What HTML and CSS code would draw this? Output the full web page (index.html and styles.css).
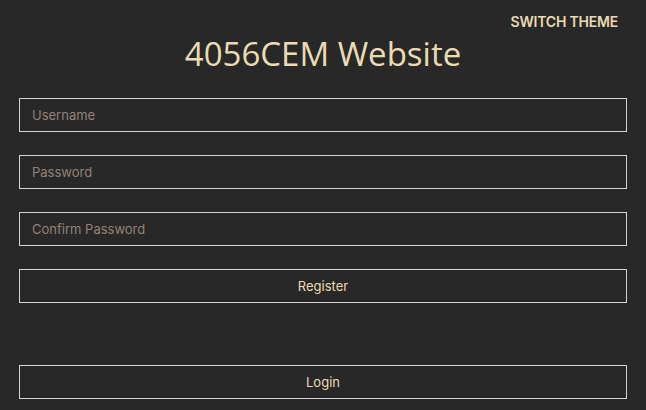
FILE: index.html
```html
<!DOCTYPE html>
<html>
<head>
<meta charset="utf-8">
<link rel="stylesheet" href="styles.css">
</head>
<body>
<div class="page">
  <header class="top">
    <button class="theme-btn">SWITCH THEME</button>
  </header>
  <h1 class="title">4056CEM Website</h1>
  <form class="form">
    <input class="field" type="text" placeholder="Username">
    <input class="field" type="password" placeholder="Password">
    <input class="field" type="password" placeholder="Confirm Password">
    <button class="btn" type="button">Register</button>
  </form>
  <div class="login-wrap">
    <button class="btn" type="button">Login</button>
  </div>
</div>
</body>
</html>
```
FILE: styles.css
```css
* { box-sizing: border-box; }
html, body { margin: 0; padding: 0; background: #282828; }
body { font-family: Inter, "Liberation Sans", sans-serif; color: #ebdbb2; }
.page { padding: 0 19px; }
.top { display: flex; justify-content: flex-end; padding: 11px 9px 0 0; height: 32px; }
.theme-btn {
  background: none; border: none; color: #ebdbb2; font-family: Inter, sans-serif;
  font-weight: 600; font-size: 14px; padding: 0; letter-spacing: -0.2px; cursor: pointer;
}
.title {
  margin: 0; text-align: center; font-family: "Open Sans", sans-serif; font-weight: 400;
  font-size: 33px; line-height: 44px; color: #ebdbb2; height: 66px;
}
.form { display: flex; flex-direction: column; gap: 23px; }
.field, .btn {
  display: block; width: 100%; height: 34px; background: transparent;
  border: 1px solid #d5d5d5; border-radius: 0; color: #ebdbb2;
  font-family: Inter, sans-serif; font-size: 13px; padding: 0 12px; outline: none;
}
.field::placeholder { color: #928374; }
.btn { text-align: center; cursor: pointer; }
.login-wrap { margin-top: 62px; }
```
